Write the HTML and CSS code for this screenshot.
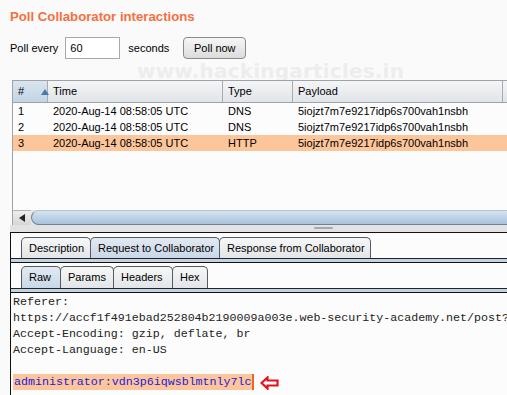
FILE: index.html
```html
<!DOCTYPE html>
<html>
<head>
<meta charset="utf-8">
<link rel="stylesheet" href="styles.css">
</head>
<body>
<div class="page">
  <div class="watermark">www.hackingarticles.in</div>
  <h1 class="title">Poll Collaborator interactions</h1>
  <div class="poll">
    <span class="lbl">Poll every</span>
    <span class="input">60</span>
    <span class="lbl secs">seconds</span>
    <span class="btn">Poll now</span>
  </div>

  <div class="table">
    <div class="thead">
      <div class="th c1 sorted"><span>#</span><span class="arrow"></span></div>
      <div class="th c2">Time</div>
      <div class="th c3">Type</div>
      <div class="th c4">Payload</div>
      <div class="th c5"></div>
    </div>
    <div class="tbody">
      <div class="tr"><div class="td c1">1</div><div class="td c2">2020-Aug-14 08:58:05 UTC</div><div class="td c3">DNS</div><div class="td c4">5iojzt7m7e9217idp6s700vah1nsbh</div></div>
      <div class="tr"><div class="td c1">2</div><div class="td c2">2020-Aug-14 08:58:05 UTC</div><div class="td c3">DNS</div><div class="td c4">5iojzt7m7e9217idp6s700vah1nsbh</div></div>
      <div class="tr sel"><div class="td c1">3</div><div class="td c2">2020-Aug-14 08:58:05 UTC</div><div class="td c3">HTTP</div><div class="td c4">5iojzt7m7e9217idp6s700vah1nsbh</div></div>
    </div>
    <div class="hscroll">
      <div class="sbtn"><span class="larrow"></span></div>
      <div class="thumb"></div>
    </div>
  </div>
  <div class="splitter"><span class="grip"></span></div>

  <div class="lower">
    <div class="tabs">
      <span class="tab">Description</span>
      <span class="tab active">Request to Collaborator</span>
      <span class="tab">Response from Collaborator</span>
    </div>
    <div class="subpane">
      <div class="tabs sub">
        <span class="tab active">Raw</span>
        <span class="tab">Params</span>
        <span class="tab">Headers</span>
        <span class="tab">Hex</span>
      </div>
    </div>
    <div class="content">
      <div class="line">Referer:</div>
      <div class="line">https://accf1f491ebad252804b2190009a003e.web-security-academy.net/post?</div>
      <div class="line">Accept-Encoding: gzip, deflate, br</div>
      <div class="line">Accept-Language: en-US</div>
      <div class="line">&nbsp;</div>
      <div class="line"><span class="hl">administrator:vdn3p6iqwsblmtnly7lc</span><span class="caret"></span><svg class="redarrow" width="19" height="14" viewBox="0 0 19 14"><path d="M1.5 7 L7.5 1.5 L7.5 4.5 L17.5 4.5 L17.5 9.5 L7.5 9.5 L7.5 12.5 Z" fill="#fff" stroke="#e8101a" stroke-width="2.2" stroke-linejoin="miter"/></svg></div>
    </div>
  </div>
</div>
</body>
</html>
```

FILE: styles.css
```css
html, body {
  margin: 0;
  padding: 0;
  background: #fafafa;
  width: 507px;
  height: 395px;
  overflow: hidden;
}
.page {
  position: relative;
  width: 507px;
  height: 395px;
  font-family: "Liberation Sans", Arial, sans-serif;
  font-size: 11px;
  color: #000;
}
.watermark {
  position: absolute;
  left: 137px;
  top: 59px;
  font-family: "DejaVu Sans", Verdana, sans-serif;
  font-weight: bold;
  font-size: 20px;
  letter-spacing: 0.2px;
  color: #ededed;
  z-index: 0;
  white-space: nowrap;
}
.title {
  position: relative;
  margin: 0;
  padding: 8px 0 0 10px;
  font-size: 13.2px;
  line-height: 17px;
  font-weight: bold;
  color: #f5703f;
}
.poll {
  position: relative;
  display: flex;
  align-items: center;
  margin-top: 12px;
  padding-left: 10px;
  height: 22px;
}
.lbl { line-height: 22px; }
.input {
  box-sizing: border-box;
  width: 55px;
  height: 22px;
  margin-left: 7px;
  border: 1px solid #a9a9a9;
  background: #fff;
  padding-left: 4px;
  line-height: 20px;
}
.secs { margin-left: 8px; }
.btn {
  box-sizing: border-box;
  margin-left: 14px;
  width: 63px;
  height: 22px;
  border: 1px solid #8a8a8a;
  border-radius: 4px;
  background: linear-gradient(#f6f6f6, #dcdcdc);
  text-align: center;
  line-height: 20px;
}
.table {
  position: relative;
  z-index: 1;
  margin: 21px 0 0 12px;
  width: 520px;
  border-left: 1px solid #9ea3a9;
  border-top: 1px solid #9ea3a9;
  background: #fcfcfc;
}
.thead {
  display: flex;
  height: 21px;
  border-bottom: 1px solid #9ea3a9;
  background: linear-gradient(#f4f5f6, #e1e4e8);
}
.th {
  box-sizing: border-box;
  height: 21px;
  line-height: 21px;
  padding-left: 5px;
  border-right: 1px solid #a8acb2;
}
.th.sorted {
  display: flex;
  align-items: center;
  background: linear-gradient(#dae5ef, #c3d4e4);
}
.arrow {
  margin-left: 17px;
  width: 0;
  height: 0;
  border-left: 4px solid transparent;
  border-right: 4px solid transparent;
  border-bottom: 6px solid #4a78ae;
}
.c1 { width: 35px; flex: none; box-sizing: border-box; }
.c2 { width: 175px; flex: none; box-sizing: border-box; }
.c3 { width: 70px; flex: none; box-sizing: border-box; }
.c4 { width: 210px; flex: none; box-sizing: border-box; }
.c5 { width: 30px; flex: none; }
.tbody {
  height: 107px;
  background: #fcfcfc;
}
.tr {
  display: flex;
  height: 16px;
  line-height: 16px;
}
.tr.sel { background: #fdc59a; }
.td { padding-left: 5px; white-space: nowrap; }
.hscroll {
  display: flex;
  height: 15px;
  background: #e4e6e8;
}
.sbtn {
  width: 18px;
  height: 15px;
  display: flex;
  align-items: center;
  justify-content: center;
  background: linear-gradient(#eeeeee, #d6d6d6);
  border-top: 1px solid #b0b4b8;
  box-sizing: border-box;
}
.larrow {
  width: 0;
  height: 0;
  border-top: 4px solid transparent;
  border-bottom: 4px solid transparent;
  border-right: 6px solid #222;
}
.thumb {
  flex: 1;
  height: 15px;
  box-sizing: border-box;
  border: 1px solid #6f8295;
  border-top-color: #b3c3d2;
  border-right: none;
  border-radius: 9px 0 0 9px;
  background: linear-gradient(#d5e3f0, #b5cde3 70%, #a9c2da);
}
.splitter {
  position: relative;
  margin-left: 10px;
  height: 7px;
  background: #e2e2e2;
}
.grip {
  position: absolute;
  left: 304px;
  top: 2px;
  width: 19px;
  height: 2px;
  background: #a8a8a8;
  border-radius: 1px;
}
.lower {
  margin-left: 10px;
  border-left: 1px solid #111;
  border-top: 1px solid #111;
  background: #fcfcfc;
  height: 170px;
}
.tabs {
  display: flex;
  padding: 4px 0 0 10px;
  height: 21px;
  border-bottom: 1px solid #222;
}
.tab {
  box-sizing: border-box;
  height: 21px;
  line-height: 20px;
  padding: 0 7px;
  border: 1px solid #555b62;
  border-bottom: none;
  border-radius: 5px 5px 0 0;
  background: linear-gradient(#f7f7f7, #e2e4e7);
  white-space: nowrap;
  margin-right: -1px;
}
.tabs > .tab:nth-child(1) { width: 70px; }
.tabs > .tab:nth-child(2) { width: 130px; }
.tabs > .tab:nth-child(3) { width: 152px; }
.tab.active {
  background: linear-gradient(#e2eaf2, #c9d7e5);
}
.subpane {
  border-top: 3px solid #c3d2e1;
  border-bottom: 3px solid #c3d2e1;
}
.subpane .tabs {
  border-top: 1px solid #111;
  padding-top: 3px;
  height: 22px;
}
.tabs.sub > .tab { height: 22px; line-height: 21px; }
.tabs.sub > .tab:nth-child(1) { width: 40px; }
.tabs.sub > .tab:nth-child(2) { width: 54px; }
.tabs.sub > .tab:nth-child(3) { width: 60px; }
.tabs.sub > .tab:nth-child(4) { width: 36px; }
.content {
  border-top: 1px solid #111;
  padding: 1px 0 0 2px;
  font-family: "Liberation Mono", "Courier New", monospace;
  font-size: 11.65px;
  color: #222;
  white-space: nowrap;
}
.line {
  display: flex;
  align-items: center;
  height: 16px;
  line-height: 16px;
}
.hl {
  background: #fdc59a;
  color: #1a1ae0;
  padding-left: 1px;
}
.caret {
  width: 2px;
  height: 16px;
  background: #f4632c;
}
.redarrow {
  margin-left: 6px;
  margin-top: 1px;
}
```
